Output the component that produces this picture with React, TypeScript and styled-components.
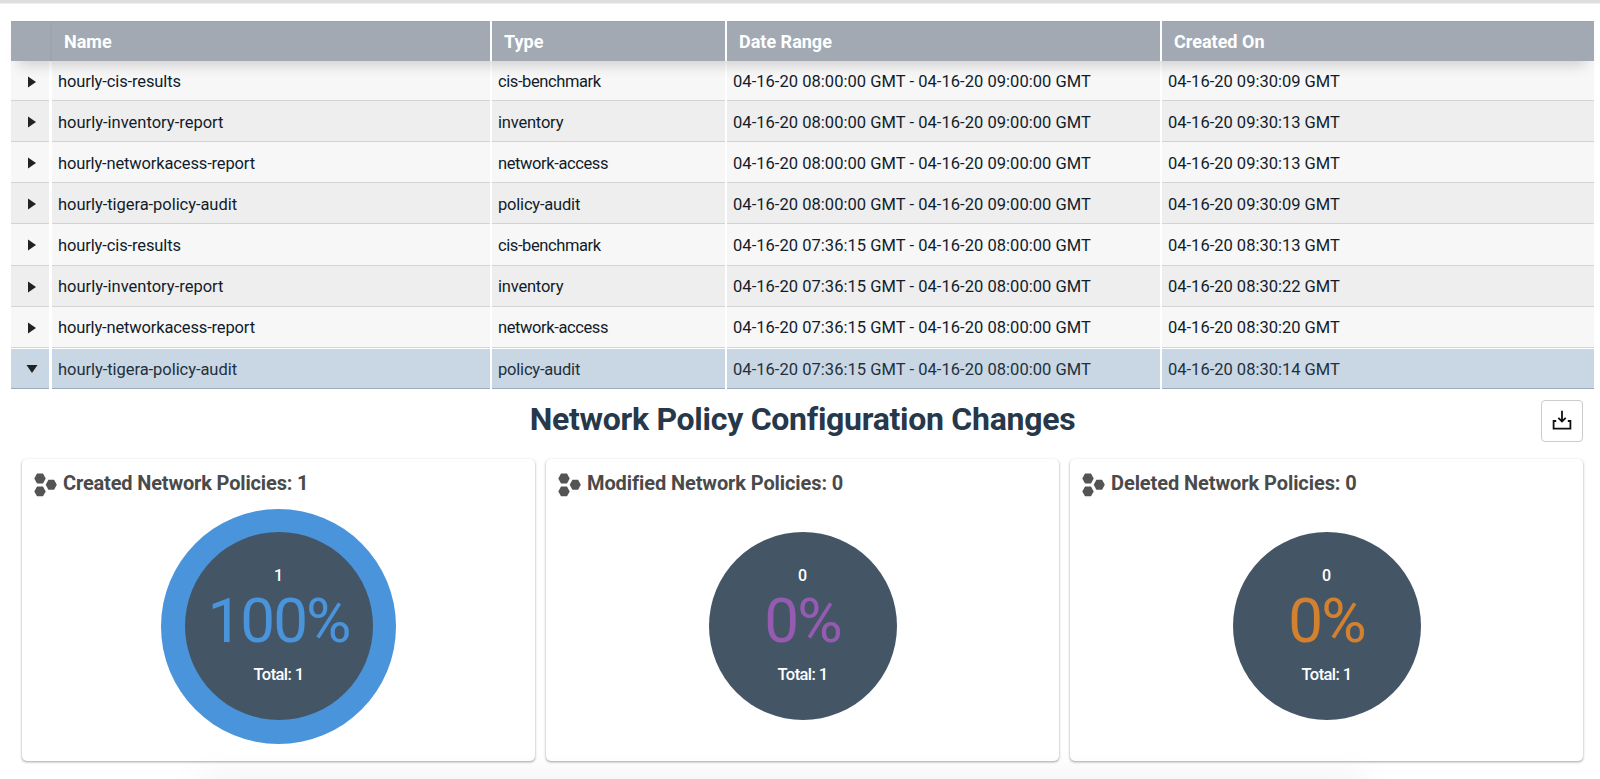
import React from 'react';
import styled, { createGlobalStyle } from 'styled-components';

const GlobalStyle = createGlobalStyle`
  * { box-sizing: border-box; }
  body {
    margin: 0;
    background: #fff;
    color: #14212f;
    font-family: Roboto, "Liberation Sans", sans-serif;
  }
`;

const Page = styled.div`
  position: relative;
  display: flex;
  flex-direction: column;
  width: 1600px;
  height: 779px;
  overflow: hidden;
  background: #fff;
`;

const TopRule = styled.div`
  height: 4px;
  flex: none;
  background: #dedede;
  border-bottom: 1px solid #efefef;
`;

const Table = styled.div`
  display: flex;
  flex-direction: column;
  margin: 17px 6px 0 11px;
`;

const columns = '39px 438px 233px 433px 1fr';

const HeaderRow = styled.div`
  position: relative;
  z-index: 1;
  display: grid;
  grid-template-columns: ${columns};
  column-gap: 2px;
  height: 40px;
  box-shadow: 0 12px 14px -8px rgba(0, 0, 0, 0.17);
`;

const HeaderCell = styled.div<{ $joined?: boolean }>`
  display: flex;
  align-items: center;
  padding: 0 0 1px 12px;
  background: #a2a9b3;
  border-top: 1px solid #9aa3ae;
  box-shadow: ${(p) => (p.$joined ? '2px 0 0 #9ca4ae' : 'none')};
  color: #fff;
  font-size: 18px;
  font-weight: 700;
`;

const Row = styled.div<{ $tone: 'light' | 'dark' | 'selected'; $first: boolean }>`
  display: grid;
  grid-template-columns: ${columns};
  column-gap: 2px;
  height: ${(p) => (p.$first ? '40px' : '41.14px')};
  > div {
    padding-top: 2px;
    background: ${(p) => ({ light: '#f7f7f7', dark: '#eeeeee', selected: '#c9d6e3' })[p.$tone]};
    border-bottom: 1px solid ${(p) => (p.$tone === 'selected' ? '#9aabbc' : '#d3d3d3')};
    border-top: ${(p) => (p.$tone === 'selected' ? '1px solid #fff' : 'none')};
    color: ${(p) => (p.$tone === 'selected' ? '#22303d' : '#111c2b')};
  }
`;

const Cell = styled.div<{ $track: number }>`
  display: flex;
  align-items: center;
  padding-left: 6px;
  font-size: 16.5px;
  letter-spacing: ${(p) => p.$track}px;
  white-space: pre;
`;

const ToggleCell = styled.div`
  display: flex;
  align-items: center;
  justify-content: center;
  margin-right: 1px;
  padding-left: 3px;
`;

const Report = styled.section`
  display: flex;
  flex-direction: column;
  padding: 0 17px 0 22px;
`;

const ReportHeader = styled.header`
  display: grid;
  grid-template-columns: 42px 1fr 42px;
  align-items: start;
  height: 70px;
  padding-top: 11px;
`;

const Title = styled.h1`
  grid-column: 2;
  margin: 0;
  padding-top: 1px;
  color: #26384a;
  font-size: 32px;
  line-height: 37px;
  font-weight: 700;
  letter-spacing: -0.28px;
  text-align: center;
`;

const DownloadButton = styled.button`
  display: flex;
  align-items: center;
  justify-content: center;
  width: 42px;
  height: 42px;
  padding: 0 0 2px;
  border: 1px solid #cbcbcb;
  border-radius: 4px;
  background: #fff;
`;

const Cards = styled.div`
  display: grid;
  grid-template-columns: repeat(3, 1fr);
  column-gap: 11px;
`;

const Card = styled.article`
  display: flex;
  flex-direction: column;
  height: 302px;
  border-radius: 5px;
  background: #fff;
  box-shadow: 0 1px 2px 1px rgba(0, 0, 0, 0.16), 0 1px 1px rgba(0, 0, 0, 0.12);
`;

const CardTitle = styled.h2<{ $track: number }>`
  display: flex;
  align-items: center;
  gap: 6px;
  height: 48px;
  margin: 0;
  padding: 1px 0 0 12px;
  color: #4a4a4a;
  font-size: 20px;
  font-weight: 700;
  letter-spacing: ${(p) => p.$track}px;
`;

const PolicyIcon = styled.svg`
  flex: none;
  width: 23px;
  height: 24px;
  margin-top: 4px;
`;

const Gauge = styled.div<{ $ring: string }>`
  display: flex;
  align-self: center;
  width: 235px;
  height: 235px;
  margin-top: 2px;
  padding: 23.5px;
  border-radius: 50%;
  background: ${(p) => p.$ring};
`;

const GaugeCore = styled.div`
  display: flex;
  flex: 1;
  flex-direction: column;
  align-items: center;
  padding-top: 34px;
  border-radius: 50%;
  background: #445566;
  color: #fff;
  font-size: 16px;
  font-weight: 500;
  line-height: 20px;
`;

const Percent = styled.div<{ $color: string }>`
  margin: 1px 0 5px;
  color: ${(p) => p.$color};
  font-size: 62px;
  font-weight: 400;
  line-height: 68px;
  letter-spacing: -2px;
`;

const Total = styled.div`
  margin-top: 5px;
  font-size: 16.5px;
  letter-spacing: -0.6px;
`;

const BottomShade = styled.div`
  position: absolute;
  left: 205px;
  right: 240px;
  bottom: -40px;
  height: 34px;
  box-shadow: 0 0 36px 6px rgba(0, 0, 0, 0.07);
  pointer-events: none;
`;

type Tracked = [text: string, track: number];

const names: Record<string, Tracked> = {
  cis: ['hourly-cis-results', -0.12],
  inventory: ['hourly-inventory-report', 0],
  network: ['hourly-networkacess-report', -0.15],
  audit: ['hourly-tigera-policy-audit', -0.05],
};

const types: Record<string, Tracked> = {
  cis: ['cis-benchmark', -0.4],
  inventory: ['inventory', -0.2],
  network: ['network-access', -0.4],
  audit: ['policy-audit', -0.2],
};

const eight = '04-16-20 08:00:00 GMT - 04-16-20 09:00:00 GMT';
const seven = '04-16-20 07:36:15 GMT - 04-16-20 08:00:00 GMT';

const rows = [
  { kind: 'cis', range: eight, created: '04-16-20 09:30:09 GMT' },
  { kind: 'inventory', range: eight, created: '04-16-20 09:30:13 GMT' },
  { kind: 'network', range: eight, created: '04-16-20 09:30:13 GMT' },
  { kind: 'audit', range: eight, created: '04-16-20 09:30:09 GMT' },
  { kind: 'cis', range: seven, created: '04-16-20 08:30:13 GMT' },
  { kind: 'inventory', range: seven, created: '04-16-20 08:30:22 GMT' },
  { kind: 'network', range: seven, created: '04-16-20 08:30:20 GMT' },
  { kind: 'audit', range: seven, created: '04-16-20 08:30:14 GMT', open: true },
];

const cards = [
  { title: 'Created Network Policies: 1', track: -0.16, count: 1, percent: '100%', color: '#4a94dc', ring: '#4a94dc' },
  { title: 'Modified Network Policies: 0', track: -0.1, count: 0, percent: '0%', color: '#945bb0', ring: 'transparent' },
  { title: 'Deleted Network Policies: 0', track: -0.08, count: 0, percent: '0%', color: '#d4812f', ring: 'transparent' },
];

const Arrow = ({ open }: { open?: boolean }) => (
  <svg width="12" height="12" viewBox="0 0 12 12" fill="#222">
    {open ? <path d="M.5 2h11L6 10z" /> : <path d="M2 .5v11L10 6z" />}
  </svg>
);

const Hexagons = () => (
  <PolicyIcon viewBox="0 0 23 24" fill="#545454">
    <path d="M3 .5h6l2.7 5-2.7 5H3L.3 5.5z" />
    <path d="M3 13.5h6l2.7 4.9L9 23.3H3L.3 18.4z" />
    <path d="M14.4 6.7h5.7l2.7 5-2.7 5h-5.7l-2.7-5z" />
  </PolicyIcon>
);

const DownloadIcon = () => (
  <svg width="20" height="20" viewBox="0 0 20 20" fill="none" stroke="#111" strokeWidth="1.8">
    <path d="M4.2 11H1.6v7.6h16.8V11h-2.6" />
    <path d="M10 .8v10.5M6.3 7.8l3.7 3.6 3.7-3.6" />
  </svg>
);

export default function App() {
  return (
    <Page>
      <GlobalStyle />
      <TopRule />
      <Table>
        <HeaderRow>
          <HeaderCell $joined />
          <HeaderCell>Name</HeaderCell>
          <HeaderCell>Type</HeaderCell>
          <HeaderCell>Date Range</HeaderCell>
          <HeaderCell>Created On</HeaderCell>
        </HeaderRow>
        {rows.map((row, i) => (
          <Row key={i} $first={i === 0} $tone={row.open ? 'selected' : i % 2 ? 'dark' : 'light'}>
            <ToggleCell>
              <Arrow open={row.open} />
            </ToggleCell>
            <Cell $track={names[row.kind][1]}>{names[row.kind][0]}</Cell>
            <Cell $track={types[row.kind][1]}>{types[row.kind][0]}</Cell>
            <Cell $track={0.04}>{row.range}</Cell>
            <Cell $track={0}>{row.created}</Cell>
          </Row>
        ))}
      </Table>
      <Report>
        <ReportHeader>
          <Title>Network Policy Configuration Changes</Title>
          <DownloadButton aria-label="Download">
            <DownloadIcon />
          </DownloadButton>
        </ReportHeader>
        <Cards>
          {cards.map((card) => (
            <Card key={card.title}>
              <CardTitle $track={card.track}>
                <Hexagons />
                {card.title}
              </CardTitle>
              <Gauge $ring={card.ring}>
                <GaugeCore>
                  {card.count}
                  <Percent $color={card.color}>{card.percent}</Percent>
                  <Total>Total: 1</Total>
                </GaugeCore>
              </Gauge>
            </Card>
          ))}
        </Cards>
      </Report>
      <BottomShade />
    </Page>
  );
}
